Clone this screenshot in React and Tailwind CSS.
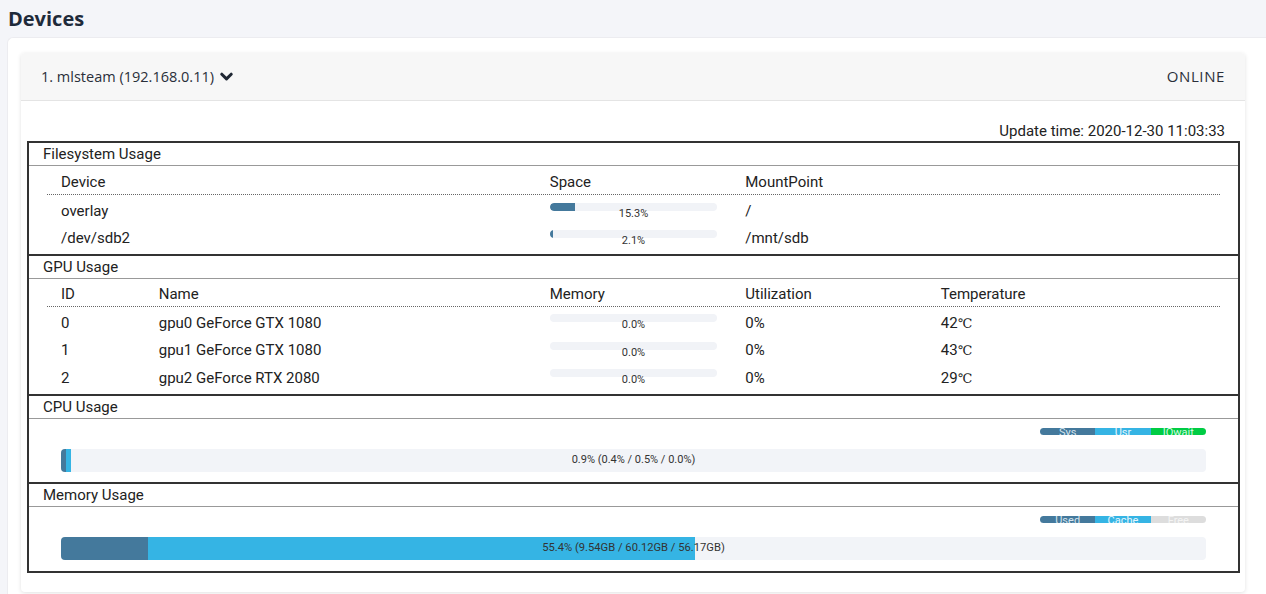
const fsRows = [
  { device: "overlay", pct: 15.3, mount: "/" },
  { device: "/dev/sdb2", pct: 2.1, mount: "/mnt/sdb" },
];

const gpuRows = [
  { id: 0, name: "gpu0 GeForce GTX 1080", mem: 0, util: "0%", temp: "42" },
  { id: 1, name: "gpu1 GeForce GTX 1080", mem: 0, util: "0%", temp: "43" },
  { id: 2, name: "gpu2 GeForce RTX 2080", mem: 0, util: "0%", temp: "29" },
];

const MiniBar = ({ pct }) => (
  <div className="flex flex-col">
    <div className="h-[8px] w-full rounded-full bg-[#f1f3f7] overflow-hidden">
      <div className="h-full bg-[#44799c] rounded-l-full" style={{ width: `${pct}%` }} />
    </div>
    <div className="-mt-[3px] text-center text-[11px] leading-[12px] text-[#333]">
      {pct.toFixed(1)}%
    </div>
  </div>
);

const Legend = ({ items }) => (
  <div className="flex justify-end">
    <div className="flex h-[7px] w-[166px] rounded-full overflow-hidden">
      {items.map((it) => (
        <div
          key={it.label}
          className={`flex-1 text-center text-[11px] leading-[9px] ${it.cls}`}
        >
          {it.label}
        </div>
      ))}
    </div>
  </div>
);

const Section = ({ title, first, children }) => (
  <div className={first ? "" : "border-t-2 border-[#333]"}>
    <div className="h-[23px] leading-[22px] pl-[14px] text-[15px] text-[#222] border-b border-[#999]">
      {title}
    </div>
    {children}
  </div>
);

export default function App() {
  return (
    <div className="min-h-screen bg-[#f4f5f9] font-['Roboto',sans-serif] text-[#222]">
      <div className="h-[37px] pl-[8px] flex items-center">
        <h1 className="font-['Open_Sans',sans-serif] font-bold text-[20px] text-[#1e2a3a]">
          Devices
        </h1>
      </div>

      <div className="ml-[7px] bg-white rounded-tl-[6px] pt-[15px] pl-[13px] pr-[21px] pb-[3px] border-l border-t border-[#ececf0]">
        <div className="rounded-[4px] bg-white shadow-[0_1px_4px_rgba(0,0,0,0.12)]">
          <div className="h-[48px] px-[20px] flex items-center justify-between bg-[#f7f7f7] border-b border-[#e4e4e4] rounded-t-[4px] font-['Open_Sans',sans-serif] text-[#2a2f3a]">
            <div className="flex items-center gap-[6px] text-[14.5px] font-medium">
              <span>1. mlsteam (192.168.0.11)</span>
              <svg width="13" height="10" viewBox="0 0 13 10" className="mt-[1px]">
                <path
                  d="M1.8 2.2 L6.5 6.9 L11.2 2.2"
                  fill="none"
                  stroke="#1f2733"
                  strokeWidth="3"
                  strokeLinecap="round"
                  strokeLinejoin="round"
                />
              </svg>
            </div>
            <div className="text-[15px] font-medium tracking-[0.04em]">ONLINE</div>
          </div>

          <div className="pt-[21px] pb-[19px] pl-[6px] pr-[5px]">
            <div className="text-right pr-[15px] text-[15px] leading-[18px]">
              Update time: 2020-12-30 11:03:33
            </div>

            <div className="mt-[1px] border-2 border-[#333] text-[15px]">
              <Section title="Filesystem Usage" first>
                <div className="px-[18px] pt-[4px] pb-[2px]">
                  <div className="grid grid-cols-12 h-[25px] items-center border-b border-dotted border-[#666]">
                    <div className="col-span-5 pl-[14px]">Device</div>
                    <div className="col-span-2 pl-[14px]">Space</div>
                    <div className="col-span-5 pl-[14px]">MountPoint</div>
                  </div>
                  <div className="pt-[3px]">
                    {fsRows.map((r) => (
                      <div key={r.device} className="grid grid-cols-12 h-[27px] items-center">
                        <div className="col-span-5 pl-[14px]">{r.device}</div>
                        <div className="col-span-2 px-[14px]">
                          <MiniBar pct={r.pct} />
                        </div>
                        <div className="col-span-5 pl-[14px]">{r.mount}</div>
                      </div>
                    ))}
                  </div>
                </div>
              </Section>

              <Section title="GPU Usage">
                <div className="px-[18px] pt-[3px] pb-[2px]">
                  <div className="grid grid-cols-12 h-[25px] items-center border-b border-dotted border-[#666]">
                    <div className="col-span-1 pl-[14px]">ID</div>
                    <div className="col-span-4 pl-[14px]">Name</div>
                    <div className="col-span-2 pl-[14px]">Memory</div>
                    <div className="col-span-2 pl-[14px]">Utilization</div>
                    <div className="col-span-3 pl-[14px]">Temperature</div>
                  </div>
                  <div className="pt-[2px]">
                    {gpuRows.map((g) => (
                      <div key={g.id} className="grid grid-cols-12 h-[27.5px] items-center">
                        <div className="col-span-1 pl-[14px]">{g.id}</div>
                        <div className="col-span-4 pl-[14px]">{g.name}</div>
                        <div className="col-span-2 px-[14px]">
                          <MiniBar pct={g.mem} />
                        </div>
                        <div className="col-span-2 pl-[14px]">{g.util}</div>
                        <div className="col-span-3 pl-[14px]">
                          {g.temp}
                          <span className="font-['DejaVu_Serif',serif] text-[13px]">℃</span>
                        </div>
                      </div>
                    ))}
                  </div>
                </div>
              </Section>

              <Section title="CPU Usage">
                <div className="px-[32px] pt-[9px] pb-[10px]">
                  <Legend
                    items={[
                      { label: "Sys", cls: "bg-[#44799c] text-[#d6e4ee]" },
                      { label: "Usr", cls: "bg-[#35b4e4] text-[#e8f6fc]" },
                      { label: "IOwait", cls: "bg-[#00cc44] text-[#d8f8e2]" },
                    ]}
                  />
                  <div className="relative mt-[14px] h-[23px] rounded-[4px] bg-[#f2f4f8] overflow-hidden flex">
                    <div className="h-full bg-[#44799c]" style={{ width: "0.4%" }} />
                    <div className="h-full bg-[#35b4e4]" style={{ width: "0.5%" }} />
                    <div className="absolute inset-0 flex items-center justify-center text-[11px] text-[#333]">
                      0.9% (0.4% / 0.5% / 0.0%)
                    </div>
                  </div>
                </div>
              </Section>

              <Section title="Memory Usage">
                <div className="px-[32px] pt-[9px] pb-[11px]">
                  <Legend
                    items={[
                      { label: "Used", cls: "bg-[#44799c] text-[#d6e4ee]" },
                      { label: "Cache", cls: "bg-[#35b4e4] text-[#e8f6fc]" },
                      { label: "Free", cls: "bg-[#dddddd] text-[#f4f4f4]" },
                    ]}
                  />
                  <div className="relative mt-[14px] h-[23px] rounded-[4px] bg-[#f2f4f8] overflow-hidden flex">
                    <div className="h-full bg-[#44799c]" style={{ width: "7.6%" }} />
                    <div className="h-full bg-[#35b4e4]" style={{ width: "47.8%" }} />
                    <div className="absolute inset-0 flex items-center justify-center text-[11.2px] text-[#333]">
                      55.4% (9.54GB / 60.12GB / 56.17GB)
                    </div>
                  </div>
                </div>
              </Section>
            </div>
          </div>
        </div>
      </div>
    </div>
  );
}
